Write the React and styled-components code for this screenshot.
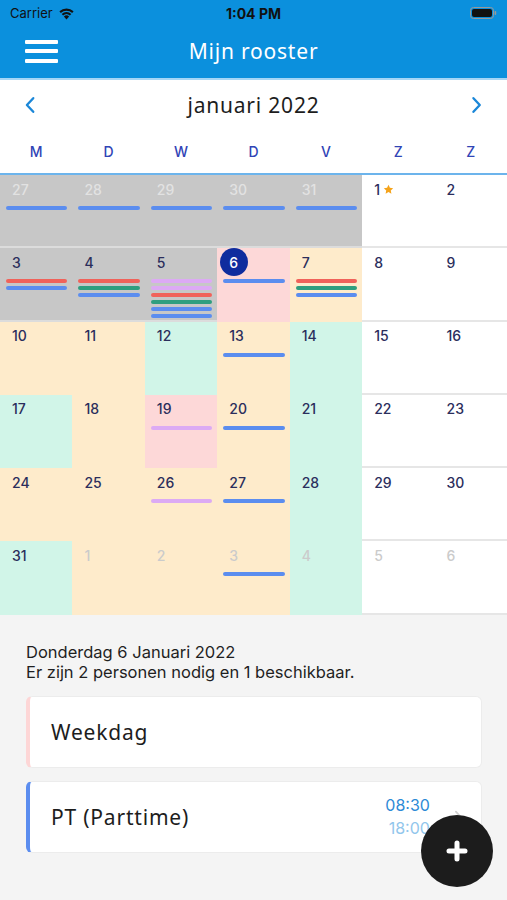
import React from "react";
import styled, { createGlobalStyle } from "styled-components";

const GlobalStyle = createGlobalStyle`
  html, body {
    margin: 0;
    padding: 0;
    background: #f4f4f4;
  }
  body {
    font-family: Inter, "Noto Sans", sans-serif;
  }
`;

const Page = styled.div`
  position: relative;
  width: 507px;
  height: 900px;
  overflow: hidden;
  background: #f4f4f4;
`;

const Header = styled.div`
  background: #0b90dd;
  border-bottom: 2px solid #a5d6f6;
`;

const StatusBar = styled.div`
  height: 26px;
  display: grid;
  grid-template-columns: 1fr auto 1fr;
  align-items: center;
  padding: 0 10px;
  font-size: 13px;
  color: #111;
  > .left {
    display: flex;
    align-items: center;
    gap: 5px;
  }
  > .time {
    font-weight: 700;
    font-size: 14px;
  }
  > .right {
    display: flex;
    justify-content: flex-end;
  }
`;

const NavBar = styled.div`
  height: 52px;
  display: grid;
  grid-template-columns: 1fr auto 1fr;
  align-items: center;
  padding: 0 25px;
  > h1 {
    margin: 0 0 2px;
    font-family: "Noto Sans", sans-serif;
    font-weight: 400;
    font-size: 21px;
    letter-spacing: 0.8px;
    color: #fff;
  }
`;

const Burger = styled.div`
  display: flex;
  flex-direction: column;
  gap: 5.5px;
  width: 33px;
  margin-bottom: 2px;
  > span {
    height: 4px;
    background: #fff;
    border-radius: 1px;
  }
`;

const MonthBar = styled.div`
  height: 50px;
  background: #fff;
  display: flex;
  align-items: center;
  justify-content: space-between;
  padding: 0 24px;
  > h2 {
    margin: 0;
    font-family: "Noto Sans", sans-serif;
    font-weight: 400;
    font-size: 21px;
    letter-spacing: 0.8px;
    color: #1d1d1d;
  }
`;

const WeekRow = styled.div`
  display: grid;
  grid-template-columns: repeat(7, 1fr);
  height: 43px;
  align-items: center;
  background: #fff;
  border-bottom: 2px solid #6cb4ec;
  > span {
    text-align: center;
    font-size: 14px;
    font-weight: 500;
    color: #3044b6;
  }
`;

const Grid = styled.div`
  display: grid;
  grid-template-columns: repeat(7, 1fr);
  grid-auto-rows: 73.3px;
`;

const tones = {
  grey: { bg: "#c7c7c7", line: "#dcdcdc" },
  white: { bg: "#ffffff", line: "#e6e6e6" },
  cream: { bg: "#feebcb", line: "#feebcb" },
  mint: { bg: "#d1f5e8", line: "#d1f5e8" },
  pink: { bg: "#fdd8d8", line: "#fdd8d8" },
};

const Cell = styled.div`
  box-sizing: border-box;
  background: ${(p) => tones[p.$tone].bg};
  border-bottom: 2px solid ${(p) => tones[p.$tone].line};
  padding: 4px 5px 0 6px;
  display: flex;
  flex-direction: column;
`;

const NumRow = styled.div`
  height: 20px;
  display: flex;
  align-items: center;
  padding-left: 6px;
  gap: 3px;
`;

const Num = styled.span`
  position: relative;
  z-index: 0;
  font-size: 14px;
  font-weight: 500;
  color: ${(p) => (p.$selected ? "#fff" : p.$muted ? p.$mutedColor : "#2b2e5c")};
  ${(p) =>
    p.$selected &&
    `
    &::before {
      content: "";
      position: absolute;
      z-index: -1;
      width: 28px;
      height: 28px;
      left: 50%;
      top: 50%;
      transform: translate(-50%, -50%);
      border-radius: 50%;
      background: #0f2c9e;
    }
  `}
`;

const Bars = styled.div`
  margin-top: 7px;
  display: flex;
  flex-direction: column;
  gap: 3px;
`;

const barColors = {
  b: "#5b8def",
  r: "#f0625a",
  g: "#2f9e7f",
  p: "#dcaaf4",
};

const Bar = styled.div`
  height: 4px;
  border-radius: 2px;
  background: ${(p) => barColors[p.$c]};
`;

const Details = styled.div`
  padding: 27px 25px 0 26px;
  > p {
    margin: 0;
    font-size: 16.5px;
    line-height: 20px;
    color: #1f1f1f;
  }
`;

const Card = styled.div`
  box-sizing: border-box;
  height: 72px;
  margin-top: ${(p) => p.$mt}px;
  background: #fff;
  border: 1px solid #ececec;
  border-left: 4px solid ${(p) => p.$accent};
  border-radius: 6px;
  display: flex;
  align-items: center;
  padding: 0 18px 0 21px;
  > .title {
    flex: 1;
    font-family: "Noto Sans", sans-serif;
    font-size: 21px;
    letter-spacing: 0.8px;
    color: #1d1d1d;
  }
`;

const Times = styled.div`
  display: flex;
  flex-direction: column;
  align-items: flex-end;
  gap: 3px;
  font-size: 16px;
  line-height: 20px;
  margin-right: 24px;
  > .start {
    color: #2d8ad6;
  }
  > .end {
    color: #92c6ec;
  }
`;

const Fab = styled.div`
  position: absolute;
  left: 421px;
  top: 815px;
  width: 72px;
  height: 72px;
  border-radius: 50%;
  background: #1c1c1c;
  display: flex;
  align-items: center;
  justify-content: center;
`;

const Star = () => (
  <svg width="11" height="11" viewBox="0 0 24 24">
    <path
      d="M12 1.8l3.1 6.5 7.1.9-5.2 4.9 1.3 7-6.3-3.4-6.3 3.4 1.3-7L1.8 9.2l7.1-.9z"
      fill="#f5a31a"
    />
  </svg>
);

const Chevron = ({ dir, color = "#1b87d8", size = 18 }) => (
  <svg width={size * 0.65} height={size} viewBox="0 0 12 18">
    <path
      d={dir === "left" ? "M9.5 2L3 9l6.5 7" : "M2.5 2L9 9l-6.5 7"}
      fill="none"
      stroke={color}
      strokeWidth="2.4"
      strokeLinecap="round"
      strokeLinejoin="round"
    />
  </svg>
);

const Wifi = () => (
  <svg width="17" height="13" viewBox="0 0 17 13">
    <path d="M8.5 12.5l2.6-3.1a4 4 0 0 0-5.2 0z" fill="#111" />
    <path d="M3.7 6.9a7.2 7.2 0 0 1 9.6 0l-1.4 1.7a5 5 0 0 0-6.8 0z" fill="#111" />
    <path d="M1.4 4.2a10.6 10.6 0 0 1 14.2 0l-1.4 1.7a8.4 8.4 0 0 0-11.4 0z" fill="#111" />
  </svg>
);

const Battery = () => (
  <svg width="27" height="12" viewBox="0 0 27 12">
    <rect x="0.5" y="0.5" width="23" height="11" rx="3" fill="none" stroke="#999" />
    <rect x="2" y="2" width="20" height="8" rx="2" fill="#111" />
    <rect x="24.6" y="4" width="1.6" height="4" rx="0.8" fill="#999" />
  </svg>
);

const days = [
  // [num, tone, muted, bars, extra]
  [27, "grey", 1, "b"], [28, "grey", 1, "b"], [29, "grey", 1, "b"], [30, "grey", 1, "b"], [31, "grey", 1, "b"], [1, "white", 0, "", "star"], [2, "white", 0, ""],
  [3, "grey", 0, "rb"], [4, "grey", 0, "rgb"], [5, "grey", 0, "pprgbb"], [6, "pink", 0, "b", "sel"], [7, "cream", 0, "rgb"], [8, "white", 0, ""], [9, "white", 0, ""],
  [10, "cream", 0, ""], [11, "cream", 0, ""], [12, "mint", 0, ""], [13, "cream", 0, "b"], [14, "mint", 0, ""], [15, "white", 0, ""], [16, "white", 0, ""],
  [17, "mint", 0, ""], [18, "cream", 0, ""], [19, "pink", 0, "p"], [20, "cream", 0, "b"], [21, "mint", 0, ""], [22, "white", 0, ""], [23, "white", 0, ""],
  [24, "cream", 0, ""], [25, "cream", 0, ""], [26, "cream", 0, "p"], [27, "cream", 0, "b"], [28, "mint", 0, ""], [29, "white", 0, ""], [30, "white", 0, ""],
  [31, "mint", 0, ""], [1, "cream", 1, ""], [2, "cream", 1, ""], [3, "cream", 1, "b"], [4, "mint", 1, ""], [5, "white", 1, ""], [6, "white", 1, ""],
];

export default function App() {
  return (
    <Page>
      <GlobalStyle />
      <Header>
        <StatusBar>
          <div className="left">
            Carrier <Wifi />
          </div>
          <span className="time">1:04 PM</span>
          <div className="right">
            <Battery />
          </div>
        </StatusBar>
        <NavBar>
          <Burger>
            <span />
            <span />
            <span />
          </Burger>
          <h1>Mijn rooster</h1>
          <div />
        </NavBar>
      </Header>

      <MonthBar>
        <Chevron dir="left" />
        <h2>januari 2022</h2>
        <Chevron dir="right" />
      </MonthBar>

      <WeekRow>
        {["M", "D", "W", "D", "V", "Z", "Z"].map((d, i) => (
          <span key={i}>{d}</span>
        ))}
      </WeekRow>

      <Grid>
        {days.map(([n, tone, muted, bars, extra], i) => (
          <Cell key={i} $tone={tone}>
            <NumRow>
              <Num
                $selected={extra === "sel"}
                $muted={muted}
                $mutedColor={tone === "grey" ? "#e2e2e2" : "#cbcbcb"}
              >
                {n}
              </Num>
              {extra === "star" && <Star />}
            </NumRow>
            {bars && (
              <Bars>
                {bars.split("").map((c, j) => (
                  <Bar key={j} $c={c} />
                ))}
              </Bars>
            )}
          </Cell>
        ))}
      </Grid>

      <Details>
        <p>Donderdag 6 Januari 2022</p>
        <p>Er zijn 2 personen nodig en 1 beschikbaar.</p>
        <Card $accent="#fdd6d6" $mt={14}>
          <span className="title">Weekdag</span>
        </Card>
        <Card $accent="#5b8def" $mt={13}>
          <span className="title">PT (Parttime)</span>
          <Times>
            <span className="start">08:30</span>
            <span className="end">18:00</span>
          </Times>
          <Chevron dir="right" color="#d0d0d0" size={14} />
        </Card>
      </Details>

      <Fab>
        <svg width="22" height="22" viewBox="0 0 22 22">
          <path d="M11 3v16M3 11h16" stroke="#fff" strokeWidth="5" strokeLinecap="round" />
        </svg>
      </Fab>
    </Page>
  );
}
